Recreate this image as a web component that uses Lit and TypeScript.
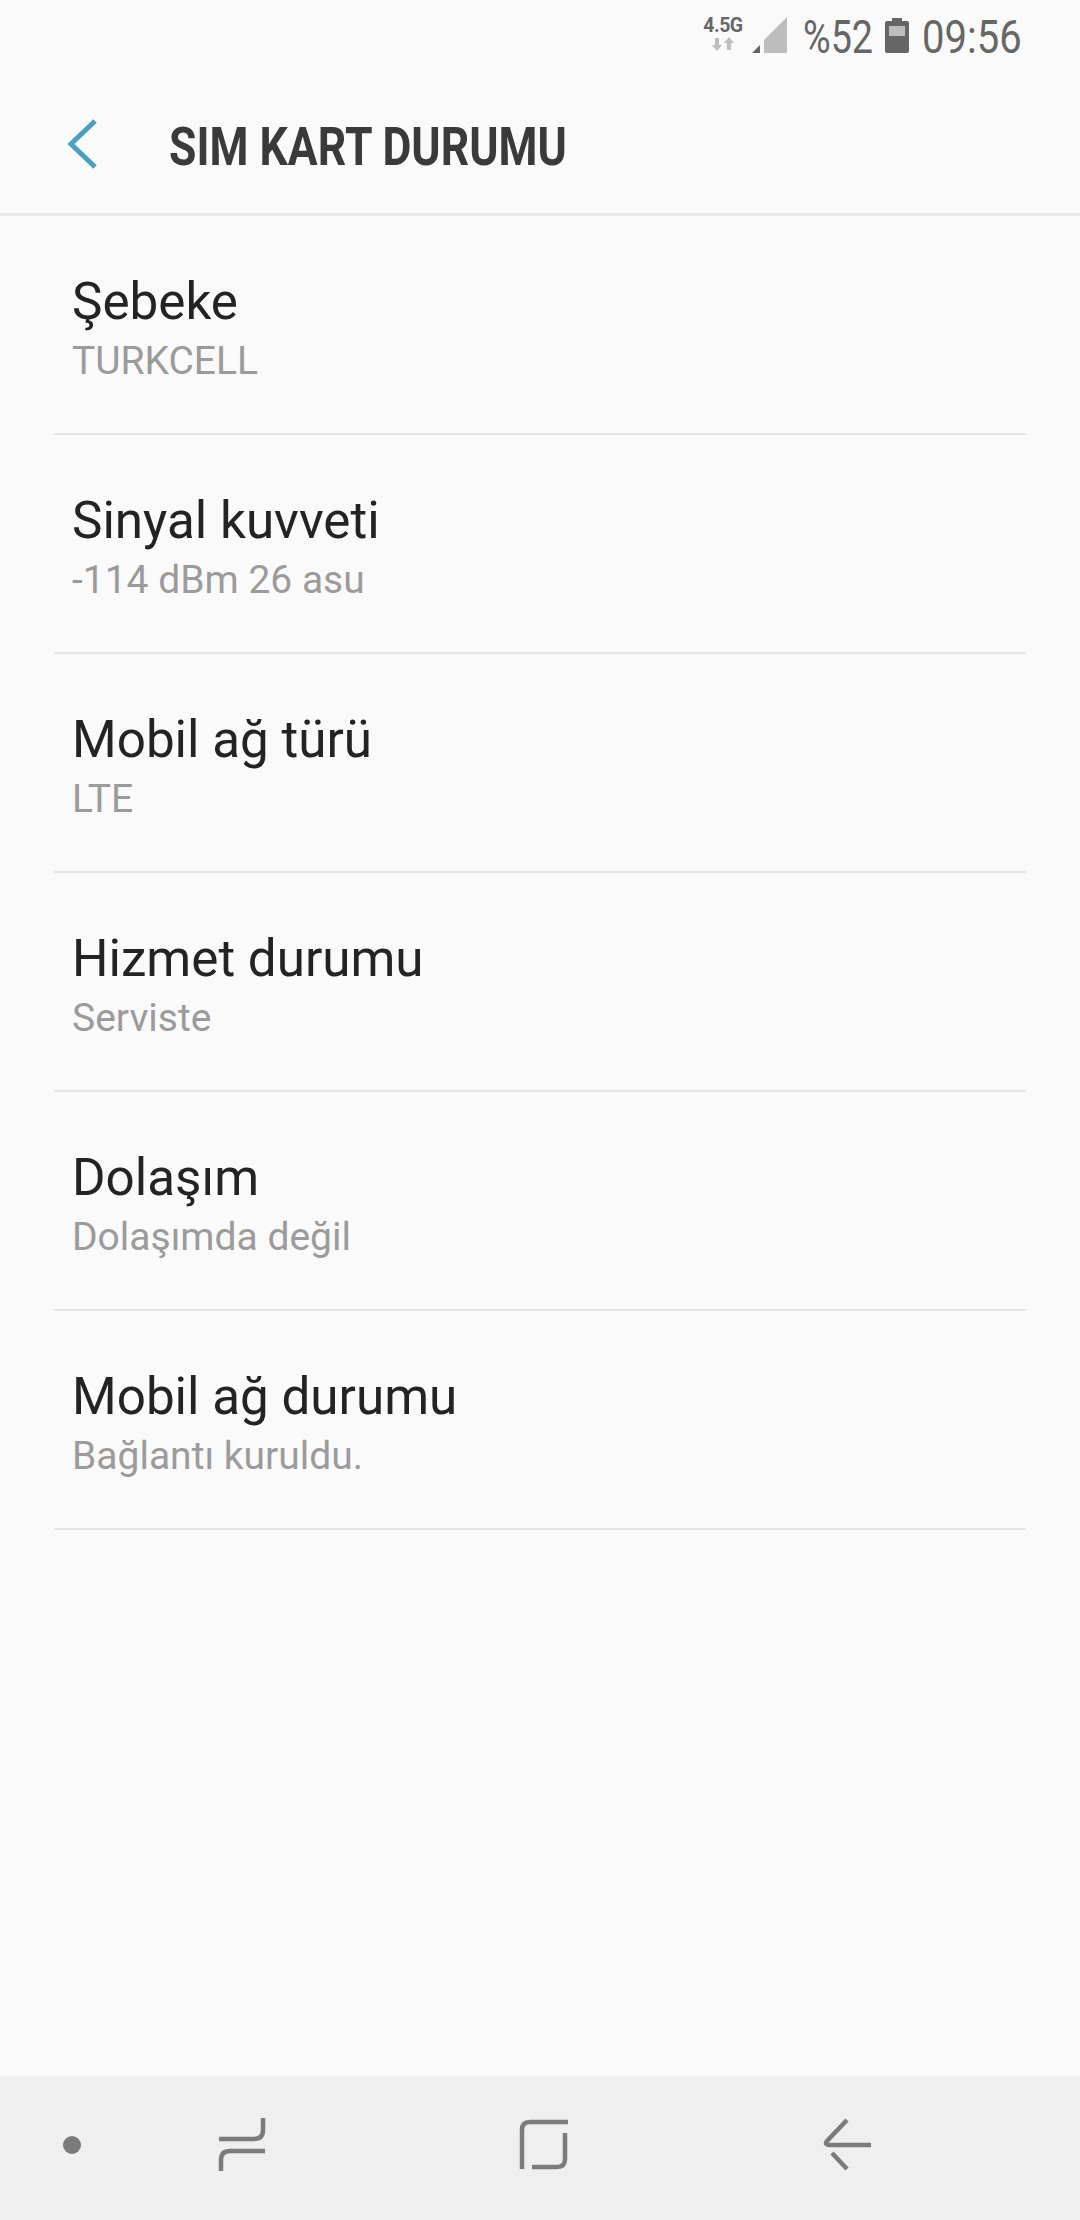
import { LitElement, html, css, svg } from 'lit'
import { customElement } from 'lit/decorators.js'

const rows = [
	['Şebeke', 'TURKCELL'],
	['Sinyal kuvveti', '-114 dBm 26 asu'],
	['Mobil ağ türü', 'LTE'],
	['Hizmet durumu', 'Serviste'],
	['Dolaşım', 'Dolaşımda değil'],
	['Mobil ağ durumu', 'Bağlantı kuruldu.'],
]

const recentIcon = svg`<path d="M263 2118v12q0 9-9 9h-35M265 2151h-35q-9 0-9 9v11" />`
const homeIcon = svg`<path d="M568 2122h-38q-8 0-8 8v39M565 2133v26q0 8-8 8h-25" />`
const backIcon = svg`<path d="M847 2120l-20 21q-3 4 3 4h41M832 2153l15 16" />`

@customElement('app-root')
export class AppRoot extends LitElement {
	static styles = css`
		:host {
			display: flex;
			flex-direction: column;
			height: 2220px;
			background: #fafafa;
			font-family: Roboto, sans-serif;
		}

		.status {
			height: 72px;
			display: flex;
			justify-content: flex-end;
			align-items: flex-start;
			padding-right: 60px;
			color: #666;
		}

		.net {
			width: 40px;
			margin-top: 15px;
			font-size: 19.5px;
			line-height: 22px;
			font-weight: 700;
			text-align: center;
			letter-spacing: -0.5px;
			white-space: nowrap;
		}

		.net svg {
			display: block;
			margin: 0 auto;
		}

		.signal {
			margin: 17px 0 0 9px;
		}

		.cond {
			display: block;
			font-size: 46px;
			line-height: 74px;
			height: 72px;
			transform: scaleX(0.87);
			transform-origin: left;
			white-space: nowrap;
		}

		.pct {
			width: 69px;
			margin-left: 16px;
			transform: scaleX(0.82);
		}

		.batt {
			margin: 18px 0 0 13px;
		}

		.clock {
			width: 98px;
			margin-left: 13px;
		}

		.bar {
			height: 141px;
			display: flex;
			align-items: center;
			border-bottom: 3px solid #e8e8e8;
		}

		.bar svg {
			margin: 3px 0 0 66px;
		}

		.title {
			margin: 8px 0 0 71px;
			font-size: 53px;
			font-weight: 700;
			color: #3a3a3a;
			transform: scaleX(0.84);
			transform-origin: left;
			white-space: nowrap;
		}

		.list {
			flex: 1;
			display: flex;
			flex-direction: column;
		}

		.row {
			height: 219px;
			box-sizing: border-box;
			margin: 0 54px;
			padding: 51px 0 0 18px;
			border-bottom: 2px solid #e6e6e6;
		}

		.name {
			font-size: 51.2px;
			line-height: 69px;
			color: #232323;
		}

		.sub {
			font-size: 39px;
			line-height: 50px;
			color: #9b9b9b;
		}

		.nav {
			display: block;
			height: 144px;
			width: 1080px;
			background: #efefef;
		}

		.nav path {
			fill: none;
			stroke: #7b7b7b;
			stroke-width: 4.5;
		}

		.nav circle {
			fill: #7b7b7b;
		}
	`

	render() {
		return html`
			<div class="status">
				<div class="net">
					4.5G
					<svg width="22" height="14" viewBox="0 0 22 14" fill="#bdbdbd">
						<path d="M3 1h4v7h3l-5 6-5-6h3zM15 13h4V6h3l-5-6-5 6h3z" />
					</svg>
				</div>
				<svg class="signal" width="35" height="36" viewBox="0 0 35 36">
					<path d="M0 36l8-8v8z" fill="#666" />
					<path d="M12 36V23L35 0v36z" fill="#bdbdbd" />
				</svg>
				<span class="cond pct">%52</span>
				<svg class="batt" width="24" height="35" viewBox="0 0 24 35">
					<path d="M7 0h10v3h5q2 0 2 2v28q0 2-2 2H2q-2 0-2-2V5q0-2 2-2h5z" fill="#666" />
					<rect x="4" y="8" width="16" height="10" fill="#bdbdbd" />
				</svg>
				<span class="cond clock">09:56</span>
			</div>
			<div class="bar">
				<svg width="32" height="50" viewBox="0 0 32 50" fill="none" stroke="#4e9fbf" stroke-width="5">
					<path d="M29 2L5 25l24 23" />
				</svg>
				<span class="title">SIM KART DURUMU</span>
			</div>
			<div class="list">
				${rows.map(
					([name, sub]) => html`
						<div class="row">
							<div class="name">${name}</div>
							<div class="sub">${sub}</div>
						</div>
					`
				)}
			</div>
			<svg class="nav" viewBox="0 2076 1080 144">
				<circle cx="72" cy="2145" r="9" />
				${recentIcon} ${homeIcon} ${backIcon}
			</svg>
		`
	}
}
